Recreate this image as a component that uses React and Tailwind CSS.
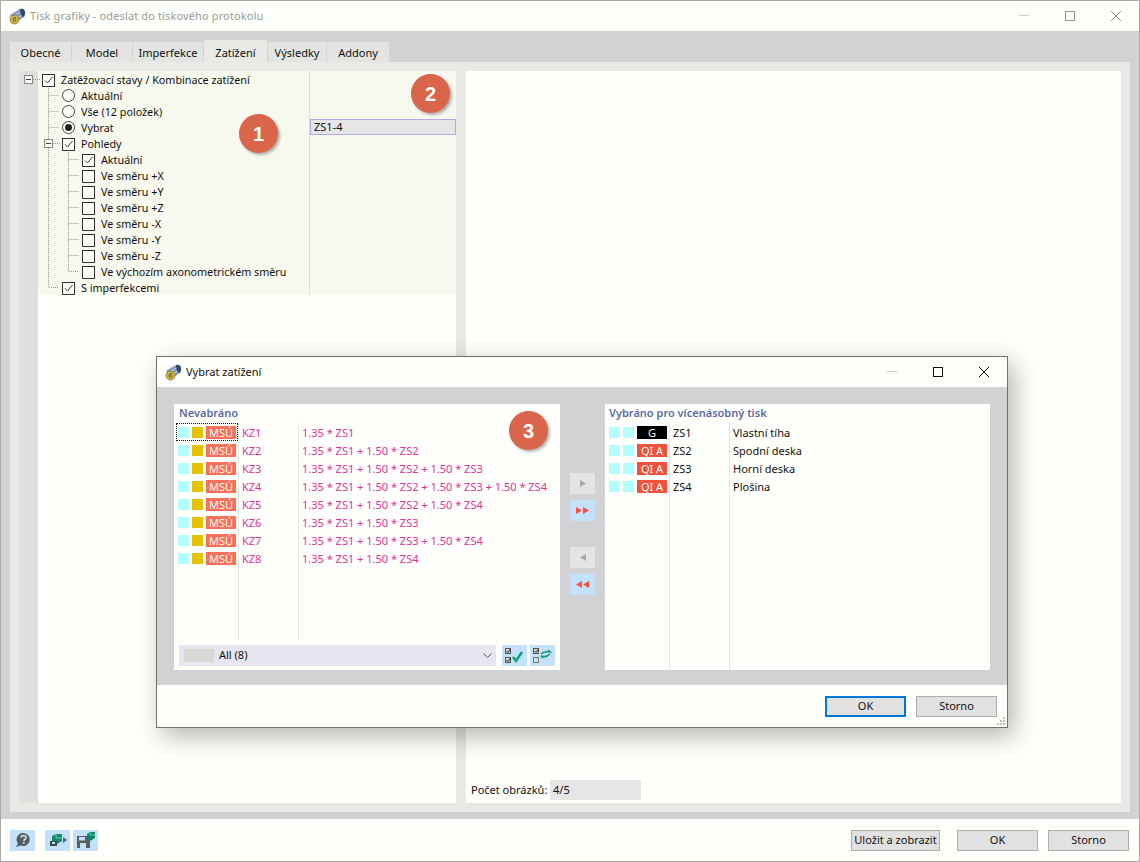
import React from 'react';

const font = { fontFamily: '"Noto Sans", sans-serif' };

const tabs = ['Obecné', 'Model', 'Imperfekce', 'Zatížení', 'Výsledky', 'Addony'];
const tabWidths = { 'Obecné': 'w-[61px]', Model: 'w-[60px]', Imperfekce: 'w-[70px]', 'Zatížení': 'w-[63px]', 'Výsledky': 'w-[58px]', Addony: 'w-[62px]' };

const combos = [
  ['KZ1', '1.35 * ZS1'],
  ['KZ2', '1.35 * ZS1 + 1.50 * ZS2'],
  ['KZ3', '1.35 * ZS1 + 1.50 * ZS2 + 1.50 * ZS3'],
  ['KZ4', '1.35 * ZS1 + 1.50 * ZS2 + 1.50 * ZS3 + 1.50 * ZS4'],
  ['KZ5', '1.35 * ZS1 + 1.50 * ZS2 + 1.50 * ZS4'],
  ['KZ6', '1.35 * ZS1 + 1.50 * ZS3'],
  ['KZ7', '1.35 * ZS1 + 1.50 * ZS3 + 1.50 * ZS4'],
  ['KZ8', '1.35 * ZS1 + 1.50 * ZS4'],
];

const cases = [
  ['G', 'ZS1', 'Vlastní tíha'],
  ['QI A', 'ZS2', 'Spodní deska'],
  ['QI A', 'ZS3', 'Horní deska'],
  ['QI A', 'ZS4', 'Plošina'],
];

function AppIcon() {
  return (
    <svg width="17" height="17" viewBox="0 0 17 17" className="shrink-0">
      <path d="M1 7 L10 1 Q14 0 16 3 Q17 7 15 9 L7 14 Z" fill="#7f96b6" />
      <path d="M3 5.5 L11 1 M4.5 8 L12.5 3.5 M6 11 L14 6.5" stroke="#d3deea" strokeWidth="1" />
      <path d="M11 1 Q15 0 16 4 Q16 8 14 9 Q11 7 11 1 Z" fill="#34496a" />
      <circle cx="5.5" cy="11.5" r="4.5" fill="#d9b93a" stroke="#77703f" strokeWidth="0.8" />
      <path d="M7 9.5 H5 Q4 10.5 4 12 Q4 13.5 5.5 13.5 Q7 13.5 7 12 Q7 11 5 11" fill="none" stroke="#5c5a35" strokeWidth="1" />
    </svg>
  );
}

function Check({ checked }) {
  return (
    <span className="w-[13px] h-[13px] shrink-0 border border-[#333] bg-[#fffffb] flex items-center justify-center">
      {checked && (
        <svg width="11" height="11" viewBox="0 0 11 11">
          <path d="M2 5.5 L4.5 8 L9.5 2" fill="none" stroke="#333" strokeWidth="1" />
        </svg>
      )}
    </span>
  );
}

function Radio({ checked }) {
  return (
    <span className="w-[13px] h-[13px] -mt-[2px] shrink-0 rounded-full border border-[#444] bg-[#fffffb] flex items-center justify-center">
      {checked && <span className="w-[7px] h-[7px] rounded-full bg-[#222]" />}
    </span>
  );
}

// connector lines in front of a tree row; x = 0 is the left edge of the gutter
function Lines({ width, d, box }) {
  return (
    <svg width={width} height="16" className="shrink-0 -ml-[19px]">
      <path d={d} fill="none" stroke="#9a9a9a" strokeWidth="1" strokeDasharray="1 1" />
      {box !== undefined && (
        <g>
          <rect x={box + 0.5} y="3.5" width="8" height="8" fill="#f7f9ef" stroke="#8a8a8a" />
          <path d={`M${box + 2} 7.5 H${box + 7}`} stroke="#444" />
        </g>
      )}
    </svg>
  );
}

function TreeRow({ lines, children, label }) {
  return (
    <div className="h-4 flex items-center">
      {lines}
      {children}
      <span className="ml-[6px] leading-4 whitespace-nowrap">{label}</span>
    </div>
  );
}

function Tree() {
  const dirs = ['+X', '+Y', '+Z', '-X', '-Y', '-Z'];
  return (
    <div className="pt-px text-[10.75px] text-[#111]">
      <TreeRow label="Zatěžovací stavy / Kombinace zatížení" lines={<Lines width={23} d="M14 7.5 H22" box={5} />}>
        <Check checked />
      </TreeRow>
      <TreeRow label="Aktuální" lines={<Lines width={43} d="M29.5 0 V16 M29.5 7.5 H40" />}>
        <Radio />
      </TreeRow>
      <TreeRow label="Vše (12 položek)" lines={<Lines width={43} d="M29.5 0 V16 M29.5 7.5 H40" />}>
        <Radio />
      </TreeRow>
      <TreeRow label="Vybrat" lines={<Lines width={43} d="M29.5 0 V16 M29.5 7.5 H40" />}>
        <Radio checked />
      </TreeRow>
      <TreeRow label="Pohledy" lines={<Lines width={43} d="M29.5 0 V3 M29.5 12 V16 M34 7.5 H42" box={25} />}>
        <Check checked />
      </TreeRow>
      <TreeRow label="Aktuální" lines={<Lines width={63} d="M29.5 0 V16 M49.5 0 V16 M49.5 7.5 H60" />}>
        <Check checked />
      </TreeRow>
      {dirs.map((dir) => (
        <TreeRow key={dir} label={`Ve směru ${dir}`} lines={<Lines width={63} d="M29.5 0 V16 M49.5 0 V16 M49.5 7.5 H60" />}>
          <Check />
        </TreeRow>
      ))}
      <TreeRow label="Ve výchozím axonometrickém směru" lines={<Lines width={63} d="M29.5 0 V16 M49.5 0 V7.5 H60" />}>
        <Check />
      </TreeRow>
      <TreeRow label="S imperfekcemi" lines={<Lines width={43} d="M29.5 0 V7.5 H40" />}>
        <Check checked />
      </TreeRow>
    </div>
  );
}

function Badge({ n, className }) {
  return (
    <div className={`absolute w-[39px] h-[39px] rounded-full bg-[#d9654a] text-[#fffffb] text-[20px] font-bold flex items-center justify-center shadow-[2px_2px_3px_rgba(0,0,0,0.3)] ${className}`} style={{ fontFamily: '"Liberation Sans", sans-serif' }}>
      {n}
    </div>
  );
}

function Button({ children, className = '' }) {
  return (
    <button className={`h-[21px] border border-[#adadad] bg-[#e1e1e1] text-[11px] text-[#111] flex items-center justify-center whitespace-nowrap ${className}`}>
      {children}
    </button>
  );
}

function Swatch({ color }) {
  return <span className={`w-[11px] h-[11px] shrink-0 ${color}`} />;
}

function Arrow({ dir, double }) {
  const color = double ? '#fb4f37' : '#a9a9a9';
  const one = dir === 'right' ? 'M0 0 L6 3.5 L0 7 Z' : 'M6 0 L0 3.5 L6 7 Z';
  return (
    <button className={`w-[25px] h-[21px] flex items-center justify-center ${double ? 'bg-[#c3e1f9]' : 'bg-[#e4e4e4]'}`}>
      <svg width={double ? 13 : 6} height="7" viewBox={double ? '0 0 13 7' : '0 0 6 7'}>
        <path d={one} fill={color} />
        {double && <path d={one} fill={color} transform="translate(7 0)" />}
      </svg>
    </button>
  );
}

function CheckAllIcon() {
  return (
    <svg width="20" height="16" viewBox="0 0 20 16">
      <rect x="0.5" y="0.5" width="5" height="5" fill="#d5d5d5" stroke="#555" />
      <path d="M1.5 3 L3 4.5 L5.5 1" fill="none" stroke="#222" />
      <rect x="0.5" y="9.5" width="5" height="5" fill="#d5d5d5" stroke="#555" />
      <path d="M1.5 12 L3 13.5 L5.5 10" fill="none" stroke="#222" />
      <path d="M8 9 L11 13 L17 4" fill="none" stroke="#0ba564" strokeWidth="2.4" />
    </svg>
  );
}

function SwapIcon() {
  return (
    <svg width="20" height="16" viewBox="0 0 20 16">
      <rect x="0.5" y="0.5" width="5" height="5" fill="#d5d5d5" stroke="#555" />
      <path d="M1.5 3 L3 4.5 L5.5 1" fill="none" stroke="#222" />
      <rect x="0.5" y="9.5" width="5" height="5" fill="none" stroke="#777" />
      <path d="M8 6 Q11 3 17 4 L15 2 M17 6 Q13 10 8 8 L10 10" fill="none" stroke="#159a68" strokeWidth="1.6" />
    </svg>
  );
}

function HelpIcon() {
  return (
    <svg width="16" height="16" viewBox="0 0 16 16">
      <path d="M8.5 1 A6.5 6.5 0 1 1 6 13.6 L1 15 L3 11.5 A6.5 6.5 0 0 1 8.5 1 Z" fill="#555c60" />
      <path d="M6 5.5 Q6.3 3.5 8.5 3.5 Q11 3.6 11 5.6 Q11 7 9.3 7.8 L8.8 9" fill="none" stroke="#c3e1f9" strokeWidth="1.7" />
      <rect x="7.9" y="10" width="1.8" height="1.8" fill="#c3e1f9" />
    </svg>
  );
}

function ModelIcon() {
  return (
    <svg width="18" height="16" viewBox="0 0 18 16">
      <path d="M3 4 L7 2 H13 V9 L8 12 H3 Z" fill="#0f8a68" />
      <path d="M7 2 V6 H13" fill="none" stroke="#5fd0a8" />
      <path d="M1 9 H8 V14 H1 Z" fill="#2d4f47" />
      <path d="M3 10 H6 V12 H3 Z" fill="#c3e1f9" />
      <path d="M14 5 L18 8 L14 11 Z" fill="#5b6468" />
    </svg>
  );
}

function SaveModelIcon() {
  return (
    <svg width="20" height="18" viewBox="0 0 20 18">
      <path d="M1 5 H11 L14 8 V17 H1 Z" fill="#585d60" />
      <rect x="3" y="6" width="6" height="3.5" fill="#c3e1f9" />
      <rect x="4" y="12" width="6" height="5" fill="#c3e1f9" />
      <path d="M11 3 L14 1 H19 V7 L15 9.5 H11 Z" fill="#0f8a68" />
      <path d="M14 1 V4 H19" fill="none" stroke="#5fd0a8" />
    </svg>
  );
}

function CaptionButtons({ dim }) {
  const stroke = dim ? '#8f8f8f' : '#111';
  return (
    <div className="flex items-center">
      <svg width="46" height="12" className="shrink-0"><path d="M18 5.5 H28" stroke="#cfcfcf" /></svg>
      <svg width="46" height="12" className="shrink-0"><rect x="18.5" y="1.5" width="9" height="9" fill="none" stroke={stroke} /></svg>
      <svg width="46" height="12" className="shrink-0"><path d="M18 1 L28 11 M28 1 L18 11" stroke={stroke} /></svg>
    </div>
  );
}

function Dialog() {
  return (
    <div className="absolute left-[156px] top-[356px] w-[852px] h-[372px] border border-[#6f6f6f] bg-[#fffffb] flex flex-col shadow-[6px_8px_24px_rgba(0,0,0,0.3)]">
      <div className="h-[30px] shrink-0 flex items-center pl-2">
        <AppIcon />
        <span className="ml-[4px] text-[11px] text-[#111]">Vybrat zatížení</span>
        <div className="ml-auto"><CaptionButtons /></div>
      </div>
      <div className="h-[298px] shrink-0 bg-[#d2d2d5] pt-[17px] pl-[17px] flex">
        <div className="relative w-[386px] h-[266px] bg-[#fffffb] flex flex-col">
          <div className="h-[19px] pl-[5px] text-[11px] font-semibold text-[#5a6c9c] leading-[18px]">Nevabráno</div>
          <div className="h-[217px] pl-[2px] flex text-[11px] text-[#e0329a]">
            <div className="w-[63px] border-r border-[#e6e6e2]">
              {combos.map(([id], i) => (
                <div key={id} className={`h-[18px] flex items-center gap-[3px] pl-[2px] ${i === 0 ? 'outline-1 outline-dotted outline-[#111] -outline-offset-1' : ''}`}>
                  <Swatch color="bg-[#b4fdff]" />
                  <Swatch color="bg-[#e6c300]" />
                  <span className="w-[30px] h-[13px] bg-[#f96f5a] text-[#fffffb] leading-[13px] text-center">MSÚ</span>
                </div>
              ))}
            </div>
            <div className="w-[60px] border-r border-[#e6e6e2] pl-[3px]">
              {combos.map(([id]) => <div key={id} className="h-[18px] leading-[20px]">{id}</div>)}
            </div>
            <div className="pl-[3px]">
              {combos.map(([id, formula]) => <div key={id} className="h-[18px] leading-[20px] whitespace-nowrap">{formula}</div>)}
            </div>
          </div>
          <div className="mt-[5px] ml-[5px] flex items-start">
            <div className="w-[317px] h-[21px] bg-[#e7e6f0] flex items-center pl-[5px] pr-[3px] text-[11px] text-[#111]">
              <span className="w-[30px] h-[13px] bg-[#d8d8d6]" />
              <span className="ml-[5px]">All (8)</span>
              <svg width="9" height="6" viewBox="0 0 9 6" className="ml-auto mr-[1px]"><path d="M0.5 0.5 L4.5 4.5 L8.5 0.5" fill="none" stroke="#555" /></svg>
            </div>
            <button className="ml-[6px] w-[25px] h-[21px] bg-[#c3e1f9] flex items-center justify-center"><CheckAllIcon /></button>
            <button className="ml-[3px] w-[25px] h-[21px] bg-[#c3e1f9] flex items-center justify-center"><SwapIcon /></button>
          </div>
          <Badge n="3" className="left-[335px] top-[7px]" />
        </div>
        <div className="w-[45px] pl-[10px] pt-[69px] flex flex-col">
          <Arrow dir="right" />
          <div className="mt-[6px]"><Arrow dir="right" double /></div>
          <div className="mt-[26px]"><Arrow dir="left" /></div>
          <div className="mt-[6px]"><Arrow dir="left" double /></div>
        </div>
        <div className="w-[385px] h-[266px] bg-[#fffffb] flex flex-col">
          <div className="h-[19px] pl-[4px] text-[11px] font-semibold text-[#5a6c9c] leading-[18px]">Vybráno pro vícenásobný tisk</div>
          <div className="flex-1 pl-[4px] flex text-[11px] text-[#111]">
            <div className="w-[61px] border-r border-[#e6e6e2]">
              {cases.map(([type, id]) => (
                <div key={id} className="h-[18px] flex items-center gap-[3px]">
                  <Swatch color="bg-[#b4fdff]" />
                  <Swatch color="bg-[#b4fdff]" />
                  <span className={`w-[30px] h-[13px] text-[#fffffb] leading-[13px] text-center ${type === 'G' ? 'bg-black' : 'bg-[#f0503c]'}`}>{type}</span>
                </div>
              ))}
            </div>
            <div className="w-[60px] border-r border-[#e6e6e2] pl-[3px]">
              {cases.map(([, id]) => <div key={id} className="h-[18px] leading-[20px]">{id}</div>)}
            </div>
            <div className="pl-[3px]">
              {cases.map(([, id, name]) => <div key={id} className="h-[18px] leading-[20px]">{name}</div>)}
            </div>
          </div>
        </div>
      </div>
      <div className="flex-1 flex justify-end gap-[10px] pt-[11px] pr-[10px] relative">
        <Button className="w-[81px] !border-2 !border-[#0078d7]">OK</Button>
        <Button className="w-[81px]">Storno</Button>
        <svg width="10" height="10" viewBox="0 0 10 10" className="absolute right-[1px] bottom-[1px]">
          <path d="M7 1h2v2H7z M4 4h2v2H4z M7 4h2v2H7z M1 7h2v2H1z M4 7h2v2H4z M7 7h2v2H7z" fill="#bdbdbd" />
        </svg>
      </div>
    </div>
  );
}

export default function App() {
  return (
    <div className="relative w-[1140px] h-[862px] overflow-hidden" style={font}>
      <div className="w-full h-full border border-[#a9a9a9] bg-[#fffffb] flex flex-col">
        <div className="h-[30px] shrink-0 flex items-center pl-2">
          <AppIcon />
          <span className="ml-[4px] text-[11px] text-[#9a9a9a] tracking-[0.13px]">Tisk grafiky - odeslat do tiskového protokolu</span>
          <div className="ml-auto"><CaptionButtons dim /></div>
        </div>

        <div className="flex-1 bg-[#d2d2d5] flex flex-col px-[9px] pb-[7px]">
          <div className="h-[31px] shrink-0 flex items-end gap-px text-[11px] text-[#111]">
            {tabs.map((tab) => (
              <div key={tab} className={`${tabWidths[tab]} flex items-center justify-center ${tab === 'Zatížení' ? 'h-[22px] pt-[4px] bg-[#e9eae6]' : 'h-5 pt-[2px] bg-[#e4e5e2]'}`}>{tab}</div>
            ))}
          </div>
          <div className="flex-1 bg-[#e9eae6] p-[9px] flex gap-[10px]">
            <div className="w-[437px] flex">
              <div className="w-[19px] bg-[#dfdfdf]" />
              <div className="flex-1 flex flex-col bg-[#fffffb]">
                <div className="relative h-[224px] bg-[#f7f9ef] flex">
                  <div className="w-[272px] border-r border-[#dcdcd8]"><Tree /></div>
                  <div className="flex-1 pt-[48px]">
                    <div className="h-4 border border-[#b4a8e8] bg-[#e6e6e6] pl-[3px] text-[11px] text-[#111] leading-[14px]">ZS1-4</div>
                  </div>
                  <Badge n="1" className="left-[201px] top-[43px]" />
                  <Badge n="2" className="left-[373px] top-[3px]" />
                </div>
              </div>
            </div>
            <div className="flex-1 bg-[#fffffb] flex flex-col justify-end pl-[5px] pb-[3px]">
              <div className="flex items-center text-[11px] text-[#111]">
                <span className="w-[79px]">Počet obrázků:</span>
                <span className="w-[91px] h-5 bg-[#e6e6e6] pl-[3px] leading-5">4/5</span>
              </div>
            </div>
          </div>
        </div>

        <div className="h-[42px] shrink-0 flex items-center pl-[9px] pr-[10px]">
          <button className="w-[25px] h-[21px] bg-[#c3e1f9] flex items-center justify-center"><HelpIcon /></button>
          <button className="ml-[10px] w-[25px] h-[21px] bg-[#c3e1f9] flex items-center justify-center"><ModelIcon /></button>
          <button className="ml-[3px] w-[25px] h-[21px] bg-[#c3e1f9] flex items-center justify-center"><SaveModelIcon /></button>
          <Button className="ml-auto w-[89px]">Uložit a zobrazit</Button>
          <Button className="ml-[17px] w-[81px]">OK</Button>
          <Button className="ml-[10px] w-[81px]">Storno</Button>
        </div>
      </div>
      <Dialog />
    </div>
  );
}
